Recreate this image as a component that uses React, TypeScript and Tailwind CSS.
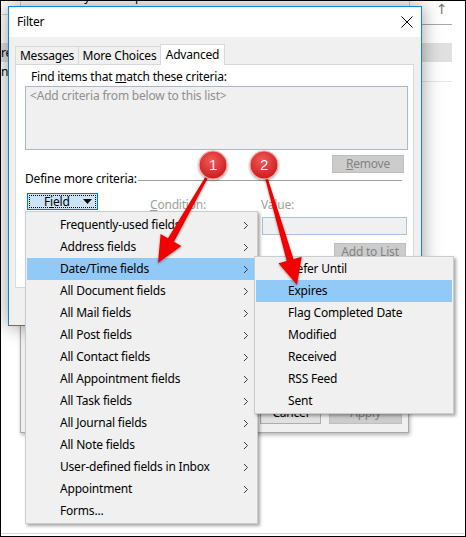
import React from "react";

const MENU_ITEMS: { label: string; sub: boolean }[] = [
  { label: "Frequently-used fields", sub: true },
  { label: "Address fields", sub: true },
  { label: "Date/Time fields", sub: true },
  { label: "All Document fields", sub: true },
  { label: "All Mail fields", sub: true },
  { label: "All Post fields", sub: true },
  { label: "All Contact fields", sub: true },
  { label: "All Appointment fields", sub: true },
  { label: "All Task fields", sub: true },
  { label: "All Journal fields", sub: true },
  { label: "All Note fields", sub: true },
  { label: "User-defined fields in Inbox", sub: true },
  { label: "Appointment", sub: true },
  { label: "Forms...", sub: false },
];

const SUB_ITEMS = ["Defer Until", "Expires", "Flag Completed Date", "Modified", "Received", "RSS Feed", "Sent"];

function Chevron() {
  return (
    <svg width="6" height="9" viewBox="0 0 6 9">
      <path d="M1 1l3.5 3.5L1 8" fill="none" stroke="#3a3a3a" strokeWidth="1" />
    </svg>
  );
}

function Background() {
  return (
    <>
      <div className="absolute left-[47px] top-[-11px] text-[12px] leading-[16px] text-black">Filter by a description</div>
      <div className="absolute left-[20px] top-0 h-[14px] w-px bg-[#d4d4d4]" />
      <div className="absolute left-0 top-[14px] h-px w-[21px] bg-[#d4d4d4]" />
      <div className="absolute left-0 top-[43px] flex h-[19px] w-[30px] items-center bg-[#e0e0e0] pl-px text-[12px] text-black">re</div>
      <div className="absolute left-[1px] top-[64px] text-[12px] leading-[16px] text-black">n</div>
      <div className="absolute left-[409px] top-0 h-[8px] w-px bg-[#d4d4d4]" />
      <div className="absolute left-[436px] top-[1px] text-[14px] leading-[16px] text-[#7a7a7a]">↑</div>
      <div className="absolute left-[400px] top-[24px] h-px w-[52px] bg-[#a8a8a8]" />
      <div className="absolute left-[400px] top-[43px] h-[19px] w-[52px] bg-[#e0e0e0]" />
      <div className="absolute left-[400px] top-[81px] h-px w-[52px] bg-[#e6e6e6]" />
      <div className="absolute left-0 top-[533px] h-px w-full bg-[#d9d9d9]" />
    </>
  );
}

function ParentDialog() {
  return (
    <div className="absolute left-[20px] top-[200px] flex h-[233px] w-[389px] flex-col items-end justify-end border border-[#a8a8a8] bg-[#f0f0f0] pb-[8px] pr-[6px] shadow-[1px_2px_4px_rgba(0,0,0,0.3)]">
      <div className="flex gap-[8px]">
        <div className="flex h-[23px] w-[61px] items-center justify-center border border-[#adadad] bg-[#e1e1e1] text-[12px] text-black">Cancel</div>
        <div className="flex h-[23px] w-[73px] items-center justify-center border border-[#bfbfbf] bg-[#cccccc] text-[12px] text-[#838383]">Apply</div>
      </div>
    </div>
  );
}

function FilterDialog() {
  return (
    <div className="absolute left-[8px] top-[6px] flex h-[320px] w-[414px] flex-col border border-[#1883d7] bg-[#f0f0f0] shadow-[0_0_18px_rgba(0,0,0,0.4)]">
      <div className="flex h-[30px] items-center justify-between bg-white pl-[8px] pr-[8px]">
        <span className="text-[12px] text-black">Filter</span>
        <svg width="12" height="12" viewBox="0 0 12 12">
          <path d="M0.5 0.5l11 11M11.5 0.5l-11 11" stroke="#000" strokeWidth="1" />
        </svg>
      </div>
      <div className="flex-1 pl-[6px] pr-[7px] pt-[7px]">
        <div className="flex h-[20px] items-end">
          <div className="flex h-[18px] w-[64px] items-center justify-center border border-b-0 border-[#d9d9d9] text-[12px] text-black">Messages</div>
          <div className="-ml-px flex h-[18px] w-[83px] items-center justify-center border border-b-0 border-[#d9d9d9] text-[12px] text-black">More Choices</div>
          <div className="relative z-10 -mb-px -ml-px flex h-[21px] w-[65px] items-start justify-center border border-b-0 border-[#d9d9d9] bg-white pt-px text-[12px] text-black">Advanced</div>
        </div>
        <div className="h-[224px] border border-[#d9d9d9] bg-white pl-[9px] pr-[4px]">
          <div className="pl-[6px] pt-[4px] text-[12px] leading-[16px] text-black">
            Find items that <u>m</u>atch these criteria:
          </div>
          <div className="mt-px h-[64px] w-[383px] border border-[#a9b9cd] bg-[#f0f0f0] px-[4px] pt-px text-[12px] leading-[16px] text-[#8f8f8f]">
            &lt;Add criteria from below to this list&gt;
          </div>
          <div className="mt-[5px] flex w-[383px] justify-end">
            <div className="mr-[4px] flex h-[18px] w-[72px] items-center justify-center border border-[#bfbfbf] bg-[#cccccc] text-[12px] text-[#838383]">
              <span><u>R</u>emove</span>
            </div>
          </div>
          <div className="-mt-[2px] flex h-[16px] w-[377px] items-center">
            <span className="text-[12px] leading-[16px] text-black">Define more criteria:</span>
            <div className="ml-px mt-[2px] h-px flex-1 bg-[#a0a0a0]" />
          </div>
          <div className="mt-[6px] flex items-start">
            <div className="ml-[2px] h-[17px] w-[71px] border border-[#0078d7] bg-[#cce4f7] p-px">
              <div className="flex h-full items-center justify-between border border-dotted border-black pl-[14px] pr-[3px] text-[12px] leading-none text-black">
                <span>F<u>i</u>eld</span>
                <svg width="9" height="5" viewBox="0 0 9 5">
                  <path d="M0 0h9L4.5 5z" fill="#000" />
                </svg>
              </div>
            </div>
            <div className="ml-[52px] w-[111px] pt-[5px] text-[12px] leading-[14px] text-[#a0a0a0]">
              <u>C</u>ondition:
            </div>
            <div className="flex w-[148px] flex-col">
              <div className="pt-[5px] text-[12px] leading-[14px] text-[#a0a0a0]">
                Va<u>l</u>ue:
              </div>
              <div className="ml-px mt-[5px] h-[18px] w-[145px] border border-[#a8c4e2] bg-[#f0f0f0]" />
              <div className="mr-[3px] mt-[8px] flex h-[17px] w-[72px] items-center justify-center self-end border border-[#bfbfbf] bg-[#cccccc] text-[12px] text-[#838383]">
                Add to List
              </div>
            </div>
          </div>
        </div>
      </div>
    </div>
  );
}

function FieldMenu() {
  return (
    <div className="absolute left-[25px] top-[211px] w-[233px] border border-[#cccccc] bg-[#f0f0f0] px-px pb-px pt-[2px] shadow-[2px_2px_3px_rgba(0,0,0,0.35)]">
      {MENU_ITEMS.map((item, i) => (
        <div
          key={item.label}
          className={`flex h-[22px] items-center justify-between pl-[33px] pr-[7px] text-[12px] text-black ${i === 2 ? "bg-[#91c9f7]" : ""}`}
        >
          <span>{item.label}</span>
          {item.sub && <Chevron />}
        </div>
      ))}
    </div>
  );
}

function SubMenu() {
  return (
    <div className="absolute left-[254px] top-[256px] w-[200px] border border-[#cccccc] bg-[#f0f0f0] p-px shadow-[2px_2px_3px_rgba(0,0,0,0.35)]">
      {SUB_ITEMS.map((label, i) => (
        <div key={label} className={`flex h-[22px] items-center pl-[32px] text-[12px] text-black ${i === 1 ? "bg-[#91c9f7]" : ""}`}>
          {label}
        </div>
      ))}
    </div>
  );
}

function Annotations() {
  return (
    <svg className="pointer-events-none absolute left-0 top-0" width="466" height="537" viewBox="0 0 466 537">
      <defs>
        <radialGradient id="badge" cx="45%" cy="35%" r="65%">
          <stop offset="0%" stopColor="#f45a5a" />
          <stop offset="100%" stopColor="#c81d1d" />
        </radialGradient>
        <filter id="sh" x="-30%" y="-30%" width="160%" height="160%">
          <feDropShadow dx="0" dy="1" stdDeviation="1.2" floodColor="#000" floodOpacity="0.4" />
        </filter>
      </defs>
      <polygon
        points="212.9,168.5 174,241.7 181.4,245.9 158,263 160.6,234.1 168,238.3 211.1,167.5"
        fill="#f20000"
        filter="url(#sh)"
      />
      <polygon
        points="265,169.7 293.5,259.1 301.7,256.8 297,285 278.5,263.2 286.7,260.9 263,170.3"
        fill="#f20000"
        filter="url(#sh)"
      />
      {[
        { x: 213, y: 165, n: "1" },
        { x: 264, y: 165, n: "2" },
      ].map((b) => (
        <g key={b.n} filter="url(#sh)">
          <circle cx={b.x} cy={b.y} r="14" fill="url(#badge)" stroke="#f7b0b0" strokeWidth="1.2" />
          <text
            x={b.x}
            y={b.y + 5}
            textAnchor="middle"
            fontSize="15"
            fontFamily="'Liberation Sans', Arial, sans-serif"
            fill="#ffffff"
          >
            {b.n}
          </text>
        </g>
      ))}
    </svg>
  );
}

export default function App() {
  return (
    <div className="relative h-[537px] w-[466px] overflow-hidden bg-white font-['Noto_Sans','DejaVu_Sans',sans-serif] tracking-[-0.2px]">
      <Background />
      <ParentDialog />
      <FilterDialog />
      <FieldMenu />
      <SubMenu />
      <Annotations />
      <div className="pointer-events-none absolute inset-0 border border-black" />
    </div>
  );
}
